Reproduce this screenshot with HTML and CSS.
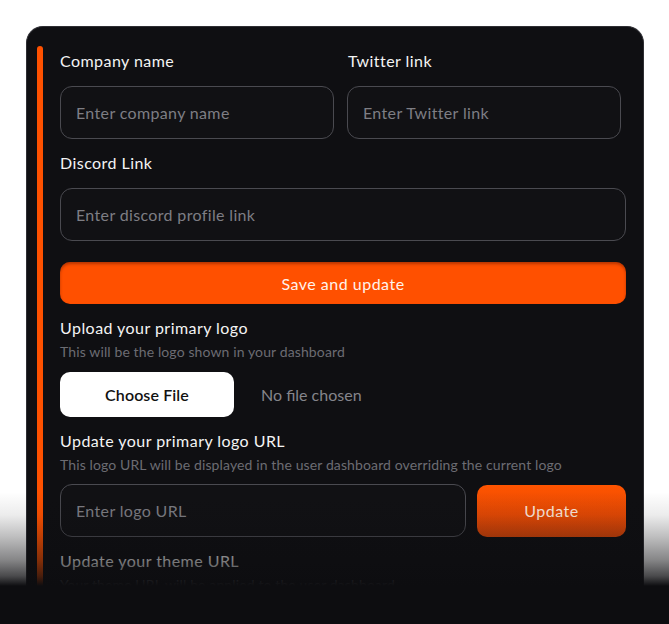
FILE: index.html
```html
<!DOCTYPE html>
<html lang="en">
<head>
<meta charset="utf-8">
<title>Settings</title>
<link rel="stylesheet" href="styles.css">
</head>
<body>
<div class="stage">
  <div class="card">
    <div class="accent"></div>
    <div class="content">
      <div class="row2">
        <div class="field">
          <label class="label">Company name</label>
          <input class="input" type="text" placeholder="Enter company name">
        </div>
        <div class="field">
          <label class="label">Twitter link</label>
          <input class="input" type="text" placeholder="Enter Twitter link">
        </div>
      </div>
      <div class="field field-gap">
        <label class="label">Discord Link</label>
        <input class="input" type="text" placeholder="Enter discord profile link">
      </div>
      <button class="btn-save">Save and update</button>
      <div class="section">
        <div class="label">Upload your primary logo</div>
        <div class="sub">This will be the logo shown in your dashboard</div>
        <div class="file-row">
          <button class="btn-file">Choose File</button>
          <span class="file-none">No file chosen</span>
        </div>
      </div>
      <div class="section">
        <div class="label">Update your primary logo URL</div>
        <div class="sub">This logo URL will be displayed in the user dashboard overriding the current logo</div>
        <div class="url-row">
          <input class="input" type="text" placeholder="Enter logo URL">
          <button class="btn-update">Update</button>
        </div>
      </div>
      <div class="section">
        <div class="label">Update your theme URL</div>
        <div class="sub">Your theme URL will be applied to the user dashboard</div>
      </div>
    </div>
  </div>
  <div class="fade"></div>
</div>
</body>
</html>
```
FILE: styles.css
```css
* { box-sizing: border-box; }
html, body { margin: 0; padding: 0; background: #ffffff; }
body { font-family: Lato, "Open Sans", sans-serif; }

.stage {
  position: relative;
  height: 624px;
  overflow: hidden;
  padding: 26px 25px 0 26px;
}

.card {
  display: flex;
  background: #0f0f12;
  border: 1px solid #2e2e33;
  border-bottom: none;
  border-radius: 17px 17px 0 0;
  padding-top: 19px;
  height: 640px;
}

.accent {
  flex: 0 0 6px;
  margin-left: 10px;
  background: #ff5100;
  border-radius: 3px 3px 0 0;
}

.content {
  flex: 1;
  margin-left: 17px;
  margin-right: 17px;
  padding-top: 5px;
  display: flex;
  flex-direction: column;
}

.row2 {
  display: grid;
  grid-template-columns: 274px 274px;
  column-gap: 13px;
}

.field { display: flex; flex-direction: column; }
.field-gap { margin-top: 14px; }

.label {
  display: block;
  color: #f4f4f4;
  font-size: 16px;
  line-height: 20px;
  font-weight: 400;
  letter-spacing: 0.45px;
}

.field .label { margin-bottom: 15px; }
.row2 .field:nth-child(2) .label { padding-left: 1px; }

.input {
  height: 53px;
  width: 100%;
  background: #111114;
  border: 1px solid #4a4a50;
  border-radius: 12px;
  padding: 0 15px;
  color: #ddd;
  font-family: inherit;
  font-size: 16px;
  letter-spacing: 0.35px;
  outline: none;
}
.input::placeholder { color: #7e7e84; }

.btn-save {
  margin-top: 21px;
  height: 42px;
  width: 100%;
  border: none;
  border-radius: 10px;
  background: #ff5000;
  box-shadow: inset 0 2px 3px rgba(90, 20, 0, 0.45);
  color: #fff3ec;
  font-family: inherit;
  font-size: 16px;
  letter-spacing: 0.5px;
}

.section { margin-top: 14px; }

.sub {
  margin-top: 6px;
  color: #6c6c72;
  font-size: 14px;
  line-height: 16px;
  letter-spacing: 0.12px;
}

.file-row {
  display: flex;
  align-items: center;
  margin-top: 12px;
}

.btn-file {
  width: 174px;
  height: 45px;
  background: #ffffff;
  border: none;
  border-radius: 10px;
  color: #111;
  font-family: inherit;
  font-size: 16px;
  font-weight: 600;
  letter-spacing: 0.1px;
}

.file-none {
  margin-left: 27px;
  color: #85858b;
  font-size: 16px;
  letter-spacing: 0;
}

.url-row {
  display: flex;
  align-items: center;
  gap: 11px;
  margin-top: 11px;
}
.url-row .input { flex: 0 0 406px; }

.btn-update {
  flex: 1;
  height: 52px;
  border: none;
  border-radius: 10px;
  background: linear-gradient(to bottom, #ff5400 0%, #e84a04 55%, #d44408 100%);
  color: #ffe9dd;
  font-family: inherit;
  font-size: 16px;
  letter-spacing: 0.5px;
}

.fade {
  position: absolute;
  left: 0;
  right: 0;
  top: 492px;
  bottom: 0;
  background: linear-gradient(to bottom,
    rgba(13, 13, 16, 0) 0px,
    rgba(13, 13, 16, 0.08) 23px,
    rgba(13, 13, 16, 0.27) 45px,
    rgba(13, 13, 16, 0.5) 68px,
    rgba(13, 13, 16, 0.75) 84px,
    rgba(13, 13, 16, 1) 94px,
    rgba(13, 13, 16, 1) 100%);
  pointer-events: none;
}
```
